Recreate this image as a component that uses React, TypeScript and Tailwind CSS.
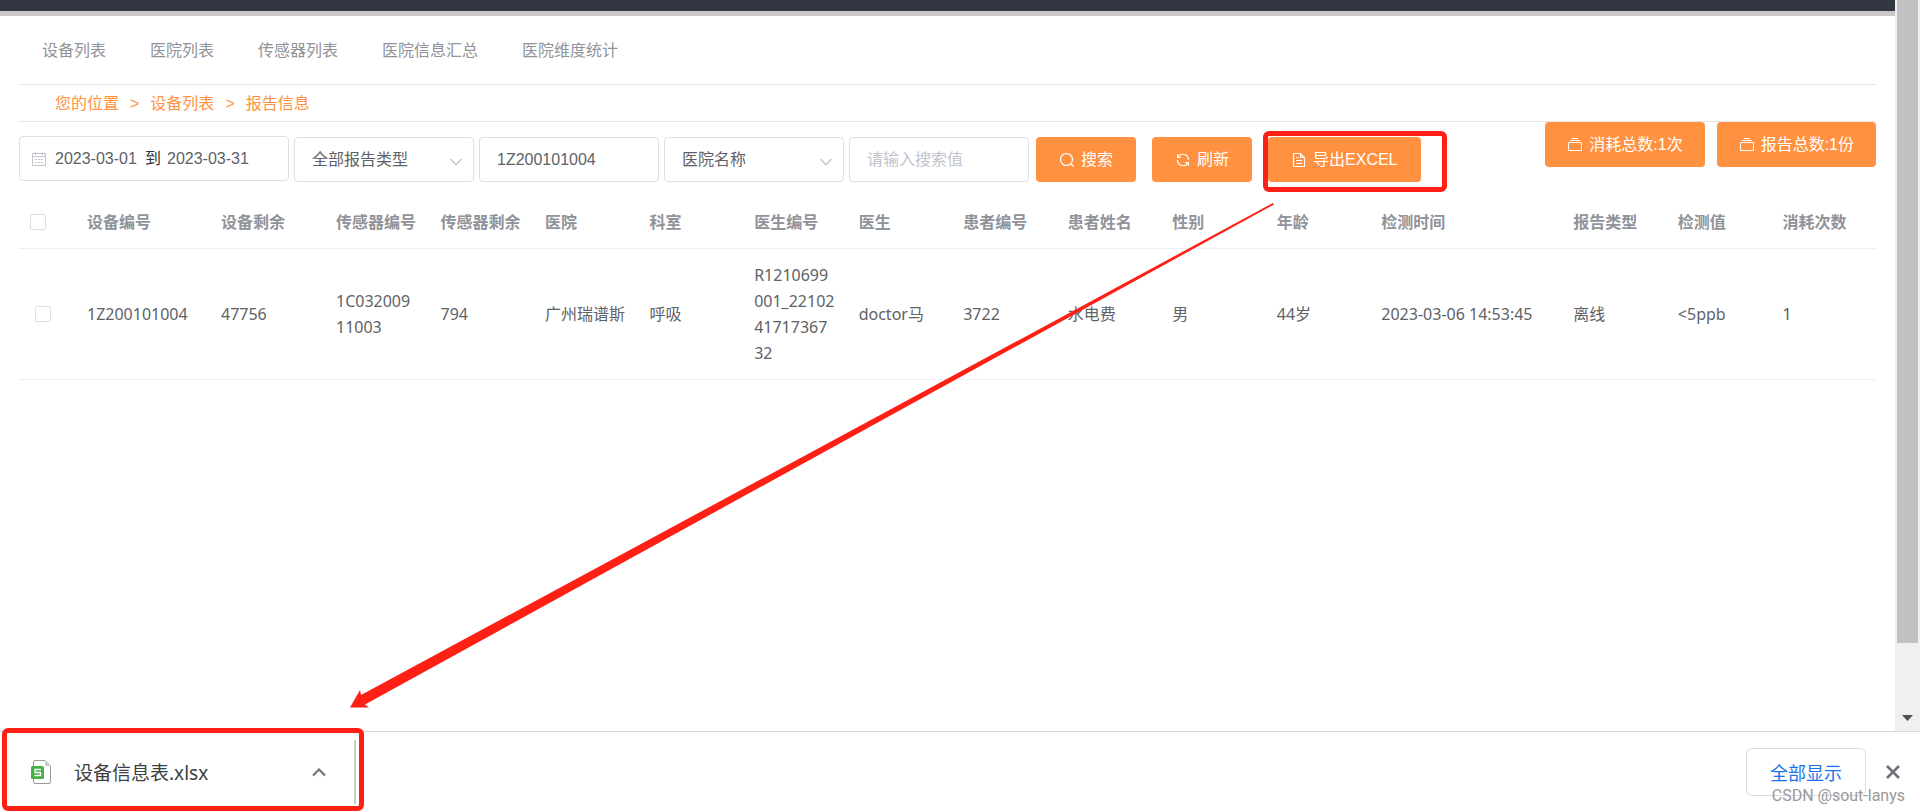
import { useState } from "react";
import clsx from "clsx";

const NAV = ["设备列表", "医院列表", "传感器列表", "医院信息汇总", "医院维度统计"];

const COLUMNS = [
  { label: "设备编号", value: "1Z200101004", width: "w-[134px]" },
  { label: "设备剩余", value: "47756", width: "w-[115px]" },
  { label: "传感器编号", value: "1C03200911003" },
  { label: "传感器剩余", value: "794" },
  { label: "医院", value: "广州瑞谱斯" },
  { label: "科室", value: "呼吸" },
  { label: "医生编号", value: "R1210699001_221024171736732" },
  { label: "医生", value: "doctor马" },
  { label: "患者编号", value: "3722" },
  { label: "患者姓名", value: "水电费" },
  { label: "性别", value: "男" },
  { label: "年龄", value: "44岁" },
  { label: "检测时间", value: "2023-03-06 14:53:45", width: "w-[192px]" },
  { label: "报告类型", value: "离线" },
  { label: "检测值", value: "<5ppb" },
  { label: "消耗次数", value: "1" },
];

const field =
  "h-[45px] w-full rounded border border-[#dcdfe6] bg-white px-[17px] text-base text-[#606266] outline-none placeholder:text-[#c0c4cc]";

function Icon({ children }: { children: React.ReactNode }) {
  return (
    <svg viewBox="0 0 16 16" className="h-4 w-4 shrink-0" fill="none" stroke="currentColor" aria-hidden="true">
      {children}
    </svg>
  );
}

function CalendarIcon() {
  return (
    <Icon>
      <path d="M1.5 2.500h13v12h-13zM1.5 5.500h13M4.500 1v3M11.5 1v3" />
      <path d="M4 8.500h2M7 8.500h2M10 8.500h2M4 11.5h2M7 11.5h2M10 11.5h2" />
    </Icon>
  );
}

function SearchIcon() {
  return (
    <Icon>
      <circle cx="7.5" cy="7.5" r="6" strokeWidth="1.2" />
      <path d="M12 12l2.5 2.5" strokeWidth="1.2" />
    </Icon>
  );
}

function RefreshIcon() {
  return (
    <Icon>
      <path d="M3 5.200A5.600 5.600 0 0 1 13.5 8M13 10.800A5.600 5.600 0 0 1 2.500 8" strokeWidth="1.2" />
      <path d="M2.600 2v3.500h3.500M13.400 14v-3.500H9.900" strokeWidth="1.2" />
    </Icon>
  );
}

function DocumentIcon() {
  return (
    <Icon>
      <path d="M2.5 1.5h7l4 4v9h-11zM9.5 1.5v4h4M5 5.5h2.5M5 8.5h6M5 11.5h6" strokeWidth="1.2" />
    </Icon>
  );
}

function BoxIcon() {
  return (
    <Icon>
      <path d="M1.5 5.500h13v8h-13zM3 3.500h10M5 1.500h6" />
    </Icon>
  );
}

type OrangeButtonProps = {
  icon: React.ReactNode;
  narrow?: boolean;
  children: React.ReactNode;
};

function OrangeButton({ icon, narrow, children }: OrangeButtonProps) {
  return (
    <button
      type="button"
      className={clsx(
        "flex h-[45px] items-center gap-[6px] rounded bg-[#ff9140] text-base whitespace-nowrap text-white",
        narrow ? "px-[22px]" : "px-[23px]"
      )}
    >
      {icon}
      <span>{children}</span>
    </button>
  );
}

function SelectField({ label, options }: { label: string; options: string[] }) {
  return (
    <div className="relative w-[180px]">
      <select aria-label={label} className={clsx(field, "appearance-none")}>
        {options.map((o) => (
          <option key={o}>{o}</option>
        ))}
      </select>
      <svg
        viewBox="0 0 12 8"
        className="pointer-events-none absolute right-3 bottom-4 h-2 w-3"
        fill="none"
        stroke="#c0c4cc"
        strokeWidth="1.3"
        aria-hidden="true"
      >
        <path d="M.5 1L6 6.8 11.5 1" />
      </svg>
    </div>
  );
}

function Checkbox({ label }: { label: string }) {
  return (
    <input
      type="checkbox"
      aria-label={label}
      className="block h-4 w-4 appearance-none rounded-xs border border-[#dcdfe6] bg-white checked:border-[#ff9140] checked:bg-[#ff9140]"
    />
  );
}

function Toolbar() {
  const [device, setDevice] = useState("1Z200101004");
  const [keyword, setKeyword] = useState("");

  return (
    <div className="flex items-start justify-between">
      <div className="flex gap-[7px] pt-[15px]">
        <div className="flex gap-[5px]">
          <div className="-mt-px flex h-[45px] w-[270px] items-center rounded border border-[#dcdfe6] px-[11px] text-[#606266]">
            <span className="text-[#c0c4cc]">
              <CalendarIcon />
            </span>
            <input aria-label="开始日期" defaultValue="2023-03-01" className="ml-2 w-[84px] outline-none" />
            <span className="mx-[6px] text-[#303133]">到</span>
            <input aria-label="结束日期" defaultValue="2023-03-31" className="w-[84px] outline-none" />
          </div>
          <SelectField label="报告类型" options={["全部报告类型", "离线"]} />
          <div className="w-[180px]">
            <input
              aria-label="设备编号"
              value={device}
              onChange={(e) => setDevice(e.target.value)}
              className={field}
            />
          </div>
          <SelectField label="搜索字段" options={["医院名称", "患者姓名"]} />
          <div className="w-[180px]">
            <input
              aria-label="搜索值"
              placeholder="请输入搜索值"
              value={keyword}
              onChange={(e) => setKeyword(e.target.value)}
              className={field}
            />
          </div>
        </div>
        <div className="flex gap-4">
          <OrangeButton icon={<SearchIcon />}>搜索</OrangeButton>
          <OrangeButton icon={<RefreshIcon />}>刷新</OrangeButton>
          <div className="relative">
            <OrangeButton icon={<DocumentIcon />}>导出EXCEL</OrangeButton>
            <div className="pointer-events-none absolute -top-[6px] -right-[26px] -bottom-[10px] -left-[5px] rounded-md border-[5px] border-[#ff2015]" />
          </div>
        </div>
      </div>
      <div className="flex gap-3">
        <OrangeButton narrow icon={<BoxIcon />}>
          消耗总数:1次
        </OrangeButton>
        <OrangeButton narrow icon={<BoxIcon />}>
          报告总数:1份
        </OrangeButton>
      </div>
    </div>
  );
}

function ReportTable() {
  return (
    <table className="mt-[14px] w-full table-fixed border-collapse text-left font-['Noto_Sans','Noto_Sans_CJK_SC',sans-serif] leading-[26px]">
      <thead>
        <tr className="border-b border-[#ebeef5] text-[#909399]">
          <th className="w-[57px] px-[11px] py-[13px]">
            <Checkbox label="全选" />
          </th>
          {COLUMNS.map((c) => (
            <th key={c.label} className={clsx("px-[11px] py-[13px] font-bold whitespace-nowrap", c.width)}>
              {c.label}
            </th>
          ))}
        </tr>
      </thead>
      <tbody>
        <tr className="border-b border-[#ebeef5] text-[#606266]">
          <td className="px-4 py-[13px]">
            <Checkbox label="选择该行" />
          </td>
          {COLUMNS.map((c) => (
            <td key={c.label} className="py-[13px] pr-3 pl-[11px] break-all">
              {c.value}
            </td>
          ))}
        </tr>
      </tbody>
    </table>
  );
}

function Scrollbar() {
  return (
    <div className="flex w-[25px] shrink-0 flex-col justify-between bg-[#f0f0f0] px-[2px]" aria-hidden="true">
      <div className="h-[88%] bg-[#c1c1c1]" />
      <svg viewBox="0 0 11 6" className="mb-[10px] h-[6px] w-[11px] self-center">
        <path d="M0 0h11L5.5 6z" fill="#505050" />
      </svg>
    </div>
  );
}

function DownloadBar() {
  return (
    <footer className="relative flex h-[81px] shrink-0 items-center justify-between border-t border-[#d8d9db] bg-white font-['Noto_Sans','Noto_Sans_CJK_SC',sans-serif]">
      <div className="flex h-16 w-[356px] items-center border-r-2 border-[#ccc] pr-7 pl-[31px]">
        <svg viewBox="0 0 20 24" className="h-6 w-5" fill="none" aria-hidden="true">
          <path
            d="M2.5 2a1.5 1.5 0 0 1 1.5-1.5h10l5.5 5.5v16a1.5 1.5 0 0 1-1.5 1.5H4A1.5 1.5 0 0 1 2.5 22z"
            fill="#fff"
            stroke="#999"
          />
          <path d="M14 .5V6h5.5z" fill="#ccc" />
          <rect y="6" width="13" height="13" rx="1.5" fill="#44b244" />
          <path d="M10 9.5H4v3h5.5v3H3.5" stroke="#fff" strokeWidth="1.3" />
        </svg>
        <a href="#" className="ml-[23px] pt-0.5 text-[19px] text-[#3c4043]">
          设备信息表.xlsx
        </a>
        <button type="button" aria-label="更多" className="ml-auto text-[#757575]">
          <svg
            viewBox="0 0 14 10"
            className="h-[10px] w-[14px]"
            fill="none"
            stroke="currentColor"
            strokeWidth="2.2"
            aria-hidden="true"
          >
            <path d="M1 8.5l6-6 6 6" />
          </svg>
        </button>
      </div>
      <div className="flex items-center gap-5 pr-5">
        <button
          type="button"
          className="h-12 w-[120px] rounded-md border border-[#dadce0] pt-0.5 text-lg text-[#1a73e8]"
        >
          全部显示
        </button>
        <button type="button" aria-label="关闭" className="text-[#6e7175]">
          <svg
            viewBox="0 0 14 14"
            className="h-[14px] w-[14px]"
            fill="none"
            stroke="currentColor"
            strokeWidth="2.6"
            aria-hidden="true"
          >
            <path d="M1 1l12 12M13 1L1 13" />
          </svg>
        </button>
      </div>
      <div className="pointer-events-none absolute -top-1 left-[2px] h-[83px] w-[362px] rounded-md border-[5px] border-[#ff2015]" />
      <span className="pointer-events-none absolute right-[15px] bottom-1 font-['Roboto',sans-serif] text-base text-[#999]">
        CSDN @sout-lanys
      </span>
    </footer>
  );
}

export default function App() {
  return (
    <div className="relative flex h-screen min-w-[1900px] flex-col overflow-hidden bg-white font-['Liberation_Sans','Noto_Sans_CJK_SC',sans-serif] text-base">
      <div className="flex min-h-0 flex-1">
        <main className="min-w-0 flex-1">
          <div className="h-4 border-b-[5px] border-[#c9c9c9] bg-[#333744]" />
          <div className="px-[19px]">
            <nav className="flex h-[69px] items-center gap-11 border-b border-[#e4e4e6] pt-0.5 pl-[23px] text-[#909399]">
              {NAV.map((n) => (
                <a key={n} href="#">
                  {n}
                </a>
              ))}
            </nav>
            <div className="flex h-[37px] items-center gap-[11px] border-b border-[#e4e4e6] pt-0.5 pl-9 text-[#ff9140]">
              <span>您的位置</span>
              <span>&gt;</span>
              <a href="#">设备列表</a>
              <span>&gt;</span>
              <a href="#">报告信息</a>
            </div>
            <Toolbar />
            <ReportTable />
          </div>
        </main>
        <Scrollbar />
      </div>
      <DownloadBar />
      {/* arrow from the export button to the downloaded file */}
      <svg
        viewBox="350 203 924 505"
        className="pointer-events-none absolute top-[203px] left-[350px] h-[505px] w-[924px]"
        aria-hidden="true"
      >
        <path d="M350 707.5L360 690 361 695 1273 203 1274 204.5 365 704.5 369 707.5z" fill="#ff2015" />
      </svg>
    </div>
  );
}
